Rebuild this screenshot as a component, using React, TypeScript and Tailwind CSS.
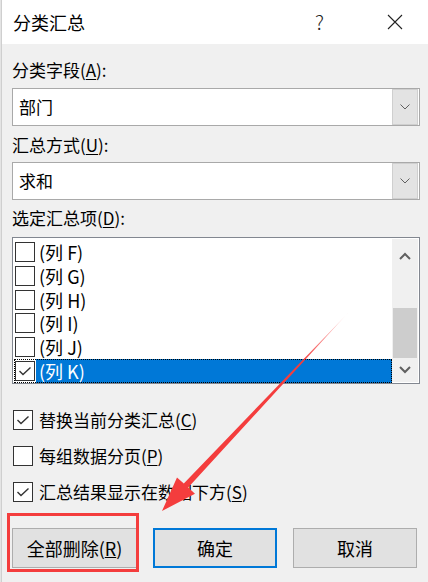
import React from 'react'

const FONT = { fontFamily: '"Noto Sans CJK SC", "Noto Sans", sans-serif' }

function Check({ checked, size = 20 }: { checked?: boolean; size?: number }) {
  return (
    <div
      className="flex items-center justify-center bg-white border border-[#333333] shrink-0"
      style={{ width: size, height: size }}
    >
      {checked && (
        <svg width="14" height="14" viewBox="0 0 14 14" fill="none">
          <polyline points="1.5,7 5,10.5 12.5,3.5" stroke="#333333" strokeWidth="1.4" />
        </svg>
      )}
    </div>
  )
}

function Combo({ value }: { value: string }) {
  return (
    <div className="h-[38px] border border-[#a9a9a9] bg-white flex items-center">
      <span className="flex-1 pl-[6px] text-[17px] leading-[22px] text-black">{value}</span>
      <div className="w-[26px] h-[36px] mr-[1px] bg-[#e3e3e3] border border-[#cfcfcf] flex items-center justify-center">
        <svg width="10" height="6" viewBox="0 0 10 6" fill="none">
          <polyline points="0.5,0.5 5,5 9.5,0.5" stroke="#606060" strokeWidth="1" />
        </svg>
      </div>
    </div>
  )
}

function Label({ text, k, rest }: { text: string; k: string; rest?: string }) {
  return (
    <div className="h-[22px] leading-[22px] text-[17px] text-black whitespace-nowrap">
      {text}(<u className="underline-offset-2">{k}</u>){rest}
    </div>
  )
}

const cols = ['F', 'G', 'H', 'I', 'J']

export default function App() {
  return (
    <div className="relative w-[428px] h-[582px] flex bg-[#f0f0f0] overflow-hidden" style={FONT}>
      <div className="w-[2px] bg-[#e4e4e4] border-r border-[#cfcfcf]" />
      <div className="flex-1 flex flex-col">
        {/* title bar */}
        <div className="h-[44px] bg-white flex items-center pl-[11px]">
          <span className="flex-1 text-[18px] text-black">分类汇总</span>
          <span className="text-[20px] text-[#222] mr-[63px] font-light">?</span>
          <svg width="16" height="16" viewBox="0 0 16 16" className="mr-[25px]">
            <path d="M1 1 L15 15 M15 1 L1 15" stroke="#222" strokeWidth="1.1" />
          </svg>
        </div>

        <div className="flex flex-col pl-[10px] pr-[8px]">
          <div className="mt-[15px]">
            <Label text="分类字段" k="A" rest=":" />
          </div>
          <div className="mt-[7px]">
            <Combo value="部门" />
          </div>
          <div className="mt-[8px]">
            <Label text="汇总方式" k="U" rest=":" />
          </div>
          <div className="mt-[6px]">
            <Combo value="求和" />
          </div>
          <div className="mt-[7px]">
            <Label text="选定汇总项" k="D" rest=":" />
          </div>

          {/* list box */}
          <div className="mt-[8px] h-[147px] border border-[#828790] bg-white flex">
            <div className="flex-1 flex flex-col pt-[2px] pl-[1px]">
              {cols.map((c) => (
                <div key={c} className="h-[24px] flex items-center">
                  <div className="ml-[1px]">
                    <Check />
                  </div>
                  <span className="ml-[4px] text-[18px] leading-[22px] text-black">(列 {c})</span>
                </div>
              ))}
              <div className="h-[24px] flex items-stretch outline outline-1 outline-dotted outline-black -outline-offset-1">
                <div className="flex items-center pl-[1px] pr-[1px]">
                  <Check checked />
                </div>
                <div className="flex-1 bg-[#0078d7] flex items-center pl-[3px]">
                  <span className="text-[18px] leading-[22px] text-white">(列 K)</span>
                </div>
              </div>
            </div>
            {/* scrollbar */}
            <div className="w-[26px] bg-[#f0f0f0] flex flex-col my-[1px] mr-[1px]">
              <div className="h-[30px] flex items-center justify-center pt-[4px]">
                <svg width="12" height="8" viewBox="0 0 12 8" fill="none">
                  <polyline points="1,7 6,2 11,7" stroke="#606060" strokeWidth="2" />
                </svg>
              </div>
              <div className="h-[39px]" />
              <div className="h-[50px] bg-[#cdcdcd] mx-[1px]" />
              <div className="flex-1 flex items-center justify-center">
                <svg width="12" height="8" viewBox="0 0 12 8" fill="none">
                  <polyline points="1,1 6,6 11,1" stroke="#606060" strokeWidth="2" />
                </svg>
              </div>
            </div>
          </div>

          {/* options */}
          <div className="mt-[24px] flex flex-col gap-[12px] pl-[1px]">
            <div className="h-[24px] flex items-center">
              <Check checked />
              <span className="ml-[6px]">
                <Label text="替换当前分类汇总" k="C" />
              </span>
            </div>
            <div className="h-[24px] flex items-center">
              <Check />
              <span className="ml-[6px]">
                <Label text="每组数据分页" k="P" />
              </span>
            </div>
            <div className="h-[24px] flex items-center">
              <Check checked />
              <span className="ml-[6px]">
                <Label text="汇总结果显示在数据下方" k="S" />
              </span>
            </div>
          </div>

          {/* buttons */}
          <div className="mt-[24px] flex gap-[16px]">
            <div className="relative">
              <button className="w-[125px] h-[40px] bg-[#e1e1e1] border border-[#adadad] text-[18px] text-black">
                全部删除(<u>R</u>)
              </button>
              <div className="absolute left-[-5px] top-[-15px] w-[132px] h-[59px] border-[3px] border-[#f43d3d] pointer-events-none" />
            </div>
            <button className="w-[124px] h-[40px] bg-[#e1e1e1] border-2 border-[#0078d7] text-[18px] text-black">
              确定
            </button>
            <button className="w-[124px] h-[40px] bg-[#e1e1e1] border border-[#adadad] text-[18px] text-black">
              取消
            </button>
          </div>
        </div>
      </div>

      {/* annotation arrow */}
      <svg className="absolute left-0 top-0 pointer-events-none" width="428" height="582" viewBox="0 0 428 582">
        <defs>
          <linearGradient id="fade" x1="348" y1="313" x2="162" y2="511" gradientUnits="userSpaceOnUse">
            <stop offset="0" stopColor="#f43d3d" stopOpacity="0.15" />
            <stop offset="0.25" stopColor="#f43d3d" stopOpacity="1" />
            <stop offset="1" stopColor="#f43d3d" stopOpacity="1" />
          </linearGradient>
        </defs>
        <polygon
          points="348.4,312.6 347.6,313.4 183.8,483.4 177,477.5 162,511 195,493.8 188.2,487.6"
          fill="url(#fade)"
        />
      </svg>
    </div>
  )
}
